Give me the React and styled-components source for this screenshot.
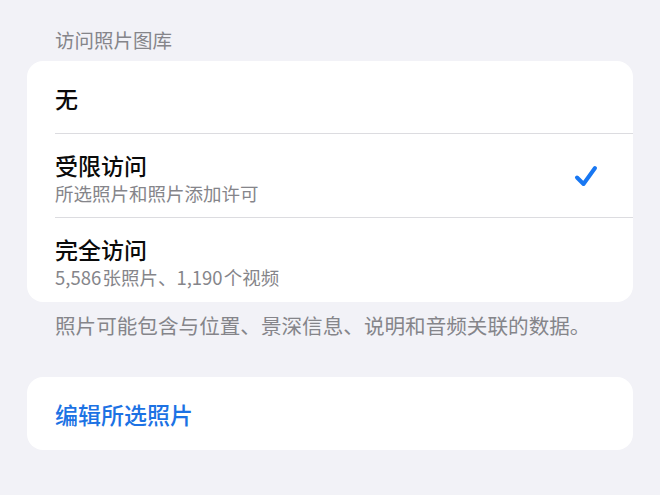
import styled, { createGlobalStyle } from "styled-components";

const GlobalStyle = createGlobalStyle`
  html, body {
    margin: 0;
    padding: 0;
    background: #f2f2f7;
  }
  body {
    font-family: "Noto Sans CJK SC", "Noto Sans", sans-serif;
    -webkit-font-smoothing: antialiased;
  }
`;

const Page = styled.div`
  width: 660px;
  height: 495px;
  overflow: hidden;
  background: #f2f2f7;
  padding: 27px 27px 0;
  box-sizing: border-box;
`;

const SectionHeader = styled.div`
  padding: 0 28px;
  height: 28px;
  line-height: 26px;
  font-size: 19.5px;
  color: #85858a;
  margin-bottom: 6px;
`;

const Card = styled.div`
  background: #ffffff;
  border-radius: 16px;
  overflow: hidden;
`;

const Row = styled.div`
  display: flex;
  align-items: center;
  height: ${(p) => p.$height}px;
  margin-left: 28px;
  padding-right: 34px;
  box-sizing: border-box;
  border-bottom: ${(p) => (p.$last ? "none" : "1px solid #dcdce0")};
`;

const RowText = styled.div`
  flex: 1;
  display: flex;
  flex-direction: column;
  gap: 1px;
  padding-top: ${(p) => p.$pt || 0}px;
`;

const Title = styled.div`
  font-size: 23px;
  line-height: 30px;
  font-weight: 500;
  color: ${(p) => (p.$blue ? "#1c72e4" : "#0a0a0a")};
`;

const Subtitle = styled.div`
  font-size: 18.5px;
  line-height: 24px;
  color: #85858a;
`;

const Footer = styled.div`
  padding: 0 28px;
  margin-top: 9px;
  font-size: 20.6px;
  line-height: 28px;
  color: #85858a;
  margin-bottom: 38px;
`;

const Check = () => (
  <svg width="26" height="24" viewBox="0 0 26 24">
    <path
      d="M4 13.5 L10.5 20 L22 4"
      fill="none"
      stroke="#1877f2"
      strokeWidth="4"
      strokeLinecap="round"
      strokeLinejoin="round"
    />
  </svg>
);

const App = () => (
  <>
    <GlobalStyle />
    <Page>
      <SectionHeader>访问照片图库</SectionHeader>
      <Card>
        <Row $height={73}>
          <RowText $pt={2}>
            <Title>无</Title>
          </RowText>
        </Row>
        <Row $height={84}>
          <RowText $pt={4}>
            <Title>受限访问</Title>
            <Subtitle>所选照片和照片添加许可</Subtitle>
          </RowText>
          <Check />
        </Row>
        <Row $height={84} $last>
          <RowText $pt={2}>
            <Title>完全访问</Title>
            <Subtitle>5,586{"\u200A"}张照片、1,190{"\u200A"}个视频</Subtitle>
          </RowText>
        </Row>
      </Card>
      <Footer>照片可能包含与位置、景深信息、说明和音频关联的数据。</Footer>
      <Card>
        <Row $height={73} $last>
          <RowText>
            <Title $blue>编辑所选照片</Title>
          </RowText>
        </Row>
      </Card>
    </Page>
  </>
);

export default App;
